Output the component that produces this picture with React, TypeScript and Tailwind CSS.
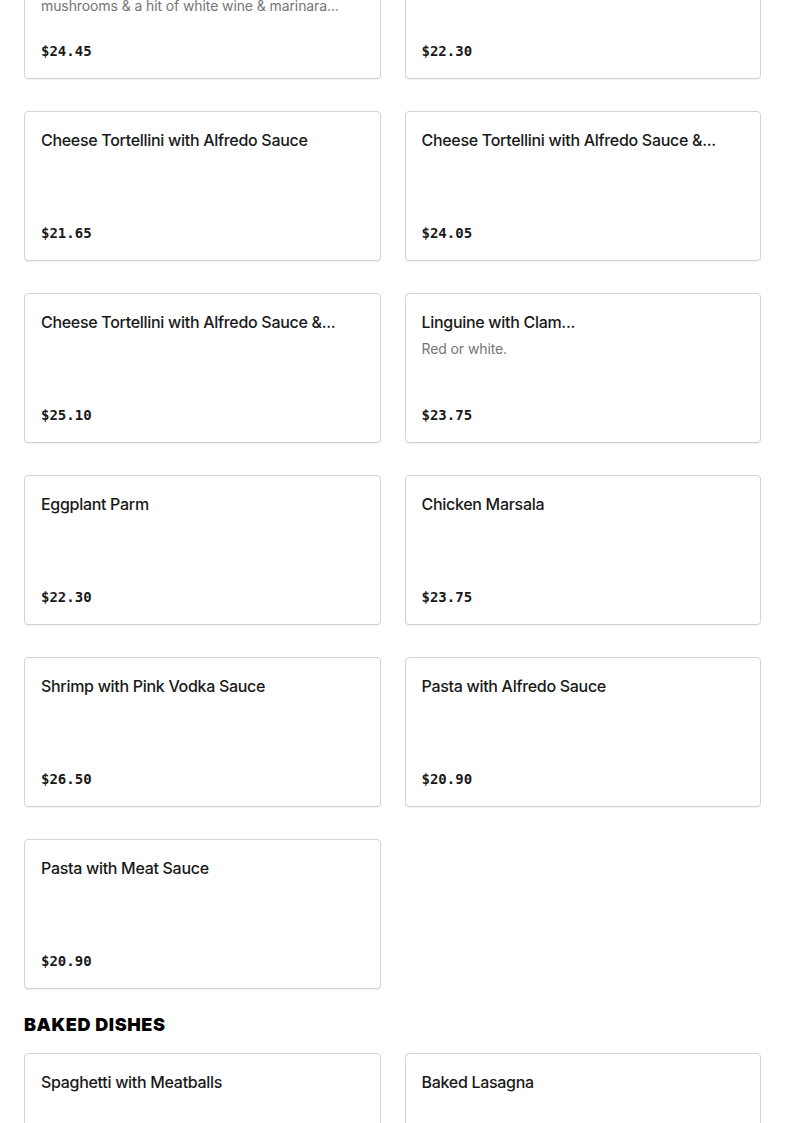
type Item = { name: string; desc?: string; price: string };

const pasta: Item[] = [
  {
    name: "Chicken Scarpariello",
    desc: "Sauteed chicken with sausage, peppers, onions, mushrooms & a hit of white wine & marinara...",
    price: "$24.45",
  },
  { name: "Penne alla Vodka", price: "$22.30" },
  { name: "Cheese Tortellini with Alfredo Sauce", price: "$21.65" },
  { name: "Cheese Tortellini with Alfredo Sauce &...", price: "$24.05" },
  { name: "Cheese Tortellini with Alfredo Sauce &...", price: "$25.10" },
  { name: "Linguine with Clam...", desc: "Red or white.", price: "$23.75" },
  { name: "Eggplant Parm", price: "$22.30" },
  { name: "Chicken Marsala", price: "$23.75" },
  { name: "Shrimp with Pink Vodka Sauce", price: "$26.50" },
  { name: "Pasta with Alfredo Sauce", price: "$20.90" },
  { name: "Pasta with Meat Sauce", price: "$20.90" },
];

const baked: Item[] = [
  { name: "Spaghetti with Meatballs", price: "$21.65" },
  { name: "Baked Lasagna", price: "$22.30" },
];

function MenuCard({ item }: { item: Item }) {
  return (
    <div className="flex h-[150px] flex-col rounded border border-[#d3d3d3] bg-white px-4 pt-4 pb-[17px] shadow-[0_1px_1px_rgba(0,0,0,0.06)]">
      <div className="truncate text-[16px] leading-6 font-medium tracking-[-0.3px] text-[#191919]">
        {item.name}
      </div>
      {item.desc && (
        <p className="mt-1 line-clamp-2 text-[14px] leading-[21px] tracking-[-0.1px] text-[#767676]">
          {item.desc}
        </p>
      )}
      <div className="mt-auto font-['DejaVu_Sans_Mono',monospace] text-[14px] leading-5 font-bold text-[#191919]">
        {item.price}
      </div>
    </div>
  );
}

export default function App() {
  return (
    <div className="min-h-[1123px] bg-white px-6 font-['Inter',sans-serif]">
      <div className="mt-[-71px] grid grid-cols-2 gap-x-6 gap-y-8">
        {pasta.map((it, i) => (
          <MenuCard key={i} item={it} />
        ))}
      </div>
      <h2 className="mt-6 mb-4 text-[18px] leading-6 font-black tracking-[0.6px] text-black uppercase">
        Baked Dishes
      </h2>
      <div className="grid grid-cols-2 gap-x-6 gap-y-8">
        {baked.map((it, i) => (
          <MenuCard key={i} item={it} />
        ))}
      </div>
    </div>
  );
}
